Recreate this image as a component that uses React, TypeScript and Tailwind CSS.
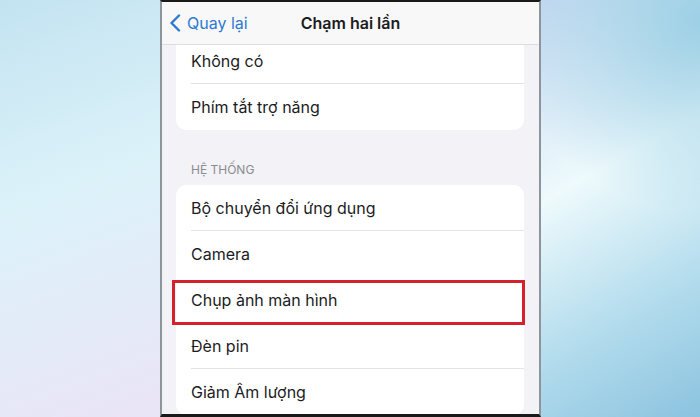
import React from "react";

const font = { fontFamily: 'Inter, "Noto Sans", "Liberation Sans", sans-serif' };

function Row({ label, sep = true, children }: { label: string; sep?: boolean; children?: React.ReactNode }) {
  return (
    <div className="relative pl-[15px]">
      <div className={`h-[46px] flex items-center text-[16px] text-[#1c1c1e] ${sep ? "border-b border-[#e3e3e6]" : ""}`}>
        {label}
      </div>
      {children}
    </div>
  );
}

export default function App() {
  return (
    <div className="w-[700px] h-[417px] flex overflow-hidden" style={font}>
      <div className="w-[160px] h-full bg-[linear-gradient(160deg,#c3e3f1_0%,#dcf2f9_45%,#eae4f7_100%)]" />
      <div className="w-[381px] h-full flex flex-col border-x-2 border-[#8d949b] border-t-2 border-t-[#1a1a1a] border-b-[3px] border-b-[#1a1a1a] bg-[#f2f2f7]">
        <div className="h-[43px] shrink-0 flex items-center relative bg-[#f8f8f9] border-b border-[#dedee2] z-10">
          <div className="flex items-center pl-[7px] gap-[6px] text-[#2d7ad2] text-[16px]">
            <svg width="12" height="18" viewBox="0 0 12 18" fill="none">
              <path d="M10 1.5 L2.5 9 L10 16.5" stroke="#2d7ad2" strokeWidth="2.4" strokeLinecap="round" strokeLinejoin="round" />
            </svg>
            <span>Quay lại</span>
          </div>
          <div className="absolute left-0 right-0 text-center text-[16px] font-semibold text-[#1c1c1e] pointer-events-none">
            Chạm hai lần
          </div>
        </div>
        <div className="flex-1 overflow-hidden px-[14px] pr-[15px]">
          <div className="-mt-[7px] bg-white rounded-[10px]">
            <Row label="Không có" />
            <Row label="Phím tắt trợ năng" sep={false} />
          </div>
          <div className="pl-[15px] pt-[33px] pb-[8px] text-[12px] text-[#8a8a8e] leading-[14px]">HỆ THỐNG</div>
          <div className="bg-white rounded-[10px]">
            <Row label="Bộ chuyển đổi ứng dụng" />
            <Row label="Camera" sep={false} />
            <Row label="Chụp ảnh màn hình">
              <div className="absolute top-[3px] bottom-[-2px] left-[-4px] right-[-1px] border-[3px] border-[#d3222b]" />
            </Row>
            <Row label="Đèn pin" />
            <Row label="Giảm Âm lượng" sep={false} />
          </div>
        </div>
      </div>
      <div className="flex-1 h-full bg-[radial-gradient(circle_at_100%_5%,#9dd0e5_0%,transparent_45%),linear-gradient(150deg,#c6d9f1_0%,#eefafc_40%,#b3dced_72%,#8cc3df_100%)]" />
    </div>
  );
}
